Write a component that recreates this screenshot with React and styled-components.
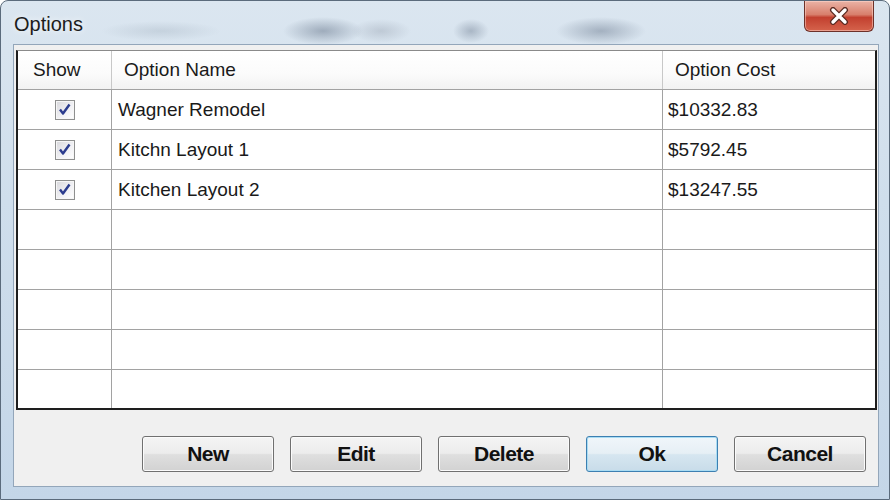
import styled, { createGlobalStyle } from 'styled-components'

const GlobalStyle = createGlobalStyle`
  html, body {
    margin: 0;
    padding: 0;
    background: #ffffff;
  }
  * {
    box-sizing: border-box;
  }
`

const Window = styled.div`
  width: 890px;
  height: 500px;
  display: flex;
  flex-direction: column;
  border: 1px solid #5b6b7c;
  border-radius: 8px 8px 0 0;
  background: linear-gradient(180deg, #dbe6f0 0%, #cfdeec 40%, #c4d6e8 100%);
  font-family: 'Liberation Sans', Arial, sans-serif;
  overflow: hidden;
`

const TitleBar = styled.div`
  height: 43px;
  flex: none;
  display: flex;
  justify-content: space-between;
  align-items: flex-start;
  padding-left: 13px;
  padding-right: 15px;
  background:
    radial-gradient(ellipse 40px 14px at 322px 30px, rgba(110, 125, 145, 0.55), transparent),
    radial-gradient(ellipse 18px 12px at 470px 30px, rgba(110, 125, 145, 0.45), transparent),
    radial-gradient(ellipse 45px 14px at 600px 30px, rgba(110, 125, 145, 0.5), transparent),
    radial-gradient(ellipse 30px 12px at 380px 30px, rgba(140, 150, 165, 0.35), transparent),
    radial-gradient(ellipse 60px 10px at 160px 30px, rgba(150, 165, 180, 0.3), transparent);
`

const Title = styled.span`
  margin-top: 12px;
  font-size: 20px;
  color: #1c1c1c;
  text-shadow: 0 0 6px rgba(255, 255, 255, 0.9);
`

const CloseButton = styled.div`
  width: 70px;
  height: 31px;
  display: flex;
  align-items: center;
  justify-content: center;
  border: 1px solid #6d3129;
  border-top: none;
  border-radius: 0 0 6px 6px;
  background: linear-gradient(180deg, #eab3a6 0%, #d87f6c 45%, #c2402f 55%, #d5634c 100%);
  box-shadow: inset 0 0 0 1px rgba(255, 220, 210, 0.5);
`

const Client = styled.div`
  flex: 1;
  display: flex;
  flex-direction: column;
  margin: 0 10px 12px 12px;
  padding: 5px 1px 12px 2px;
  background: #f0f0f0;
  border: 1px solid #93a6ba;
`

const Grid = styled.div`
  display: flex;
  flex-direction: column;
  background: #ffffff;
  border: 2px solid #1e1e1e;
  border-top: 1px solid #8a8a8a;
`

const Row = styled.div`
  display: grid;
  grid-template-columns: 94px 1fr 212px;
  height: ${(p) => p.$h}px;
  border-bottom: ${(p) => (p.$last ? 'none' : '1px solid #a2a2a2')};
  background: ${(p) => (p.$header ? 'linear-gradient(180deg, #ffffff 0%, #fbfbfb 60%, #f2f2f2 100%)' : '#ffffff')};
`

const Cell = styled.div`
  display: flex;
  align-items: center;
  justify-content: ${(p) => (p.$center ? 'center' : 'flex-start')};
  padding-left: ${(p) => p.$pad || 0}px;
  border-right: ${(p) => (p.$end ? 'none' : `1px solid ${p.$header ? '#c8c8c8' : '#a2a2a2'}`)};
  font-size: 19px;
  color: #1a1a1a;
  white-space: nowrap;
`

const CheckBox = styled.span`
  width: 20px;
  height: 20px;
  display: flex;
  align-items: center;
  justify-content: center;
  border: 1px solid #8e8f8f;
  background: linear-gradient(135deg, #d8d8dc 0%, #f0f0f4 55%, #ffffff 100%);
  box-shadow: inset 0 0 0 1px #f6f6f6;
`

const ButtonRow = styled.div`
  display: flex;
  justify-content: flex-end;
  gap: 16px;
  padding: 26px 11px 0 0;
`

const Button = styled.div`
  width: 132px;
  height: 36px;
  display: flex;
  align-items: center;
  justify-content: center;
  border: 1px solid ${(p) => (p.$default ? '#3c7fb1' : '#707070')};
  border-radius: 3px;
  background: ${(p) =>
    p.$default
      ? 'linear-gradient(180deg, #f0f6fa 0%, #e6eff5 48%, #d6e6f0 52%, #c8dce9 100%)'
      : 'linear-gradient(180deg, #f4f4f4 0%, #ececec 48%, #dfdfdf 52%, #d2d2d2 100%)'};
  box-shadow: inset 0 0 0 1px ${(p) => (p.$default ? '#a9dcf3' : '#fbfbfb')};
  font-size: 21px;
  font-weight: bold;
  color: #111;
  letter-spacing: -0.5px;
`

const options = [
  { name: 'Wagner Remodel', cost: '$10332.83' },
  { name: 'Kitchn Layout 1', cost: '$5792.45' },
  { name: 'Kitchen Layout 2', cost: '$13247.55' },
]

function Check() {
  return (
    <CheckBox>
      <svg width="15" height="15" viewBox="0 0 15 15">
        <path d="M3 7.5 L6 11.5 L12.5 2.5" fill="none" stroke="#2b3c8e" strokeWidth="2.4" strokeLinejoin="round" />
      </svg>
    </CheckBox>
  )
}

export default function App() {
  const rows = [...options, null, null, null, null, null]

  return (
    <>
      <GlobalStyle />
      <Window>
        <TitleBar>
          <Title>Options</Title>
          <CloseButton>
            <svg width="22" height="18" viewBox="0 0 22 18">
              <path d="M5 3 L17 15 M17 3 L5 15" stroke="#5a2a22" strokeWidth="6" strokeLinecap="round" />
              <path d="M5 3 L17 15 M17 3 L5 15" stroke="#ffffff" strokeWidth="3.4" strokeLinecap="round" />
            </svg>
          </CloseButton>
        </TitleBar>
        <Client>
          <Grid>
            <Row $header $h={39}>
              <Cell $header $pad={15}>Show</Cell>
              <Cell $header $pad={12}>Option Name</Cell>
              <Cell $header $end $pad={12}>Option Cost</Cell>
            </Row>
            {rows.map((r, i) => (
              <Row key={i} $h={i === rows.length - 1 ? 38 : 40} $last={i === rows.length - 1}>
                <Cell $center>{r && <Check />}</Cell>
                <Cell $pad={6}>{r && r.name}</Cell>
                <Cell $end $pad={5}>{r && r.cost}</Cell>
              </Row>
            ))}
          </Grid>
          <ButtonRow>
            <Button>New</Button>
            <Button>Edit</Button>
            <Button>Delete</Button>
            <Button $default>Ok</Button>
            <Button>Cancel</Button>
          </ButtonRow>
        </Client>
      </Window>
    </>
  )
}
